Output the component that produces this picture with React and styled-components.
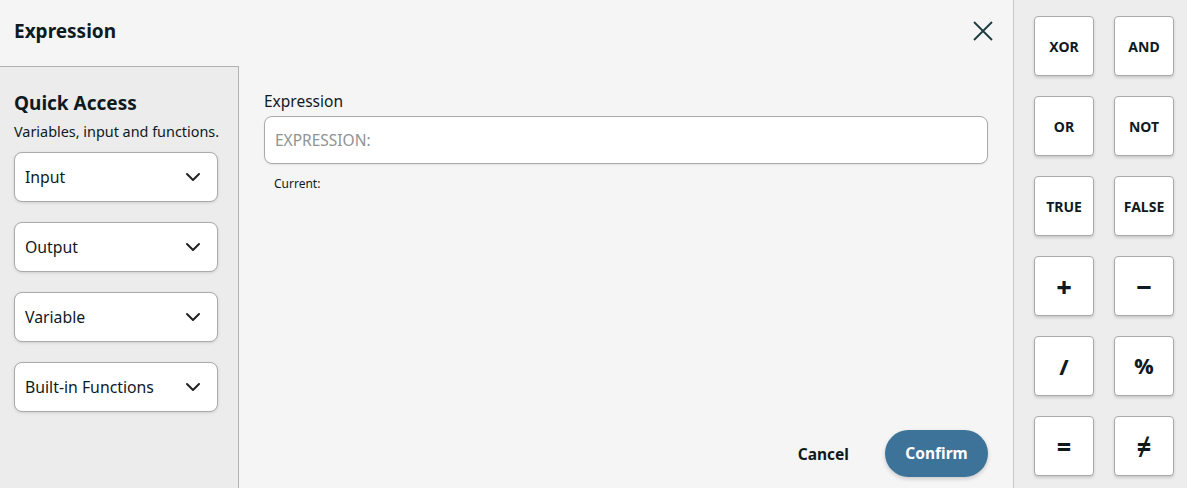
import React from "react";
import styled, { createGlobalStyle } from "styled-components";

const GlobalStyle = createGlobalStyle`
  html, body {
    margin: 0;
    padding: 0;
    height: 100%;
  }
  body {
    font-family: "Noto Sans", "Open Sans", sans-serif;
    color: #0e1a1f;
    background: #f4f5f4;
  }
  * {
    box-sizing: border-box;
  }
`;

const Page = styled.div`
  display: flex;
  width: 1187px;
  height: 488px;
  overflow: hidden;
`;

const Dialog = styled.div`
  flex: 1;
  display: flex;
  flex-direction: column;
  background: #f4f5f4;
  border-right: 1px solid #c9cbca;
`;

const Header = styled.div`
  height: 66px;
  display: flex;
  align-items: center;
  justify-content: space-between;
  padding: 0 18px 4px 14px;
`;

const Title = styled.h1`
  margin: 0;
  font-size: 19px;
  font-weight: 700;
`;

const CloseButton = styled.button`
  border: none;
  background: none;
  padding: 0;
  width: 24px;
  height: 24px;
  display: flex;
  align-items: center;
  justify-content: center;
  color: #1d3a40;
  cursor: pointer;
`;

const Body = styled.div`
  flex: 1;
  display: flex;
  min-height: 0;
`;

const Sidebar = styled.aside`
  width: 239px;
  background: #ebeceb;
  border-top: 1px solid #b0b1b0;
  border-right: 1px solid #b0b1b0;
  padding: 22px 20px 0 14px;
  display: flex;
  flex-direction: column;
`;

const SideTitle = styled.h2`
  margin: 0;
  font-size: 19px;
  font-weight: 700;
  line-height: 28px;
`;

const SideText = styled.p`
  margin: 5px -20px 10px 0;
  font-size: 14.4px;
  line-height: 20px;
  white-space: nowrap;
`;

const DropList = styled.div`
  display: flex;
  flex-direction: column;
  gap: 20px;
`;

const Dropdown = styled.button`
  width: 204px;
  height: 50px;
  display: flex;
  align-items: center;
  justify-content: space-between;
  padding: 0 16px 0 10px;
  background: #fff;
  border: 1px solid #a9abaa;
  border-radius: 8px;
  box-shadow: 0 1px 3px rgba(0, 0, 0, 0.12);
  font-family: inherit;
  font-size: 15.8px;
  color: #0e1a1f;
  cursor: pointer;
`;

const Main = styled.main`
  flex: 1;
  display: flex;
  flex-direction: column;
  padding: 24px 25px 11px 25px;
`;

const Label = styled.label`
  font-size: 15.5px;
  line-height: 22px;
  margin-bottom: 4px;
`;

const Input = styled.input`
  width: 100%;
  height: 48px;
  flex-shrink: 0;
  border: 1px solid #a9abaa;
  border-radius: 8px;
  background: #fff;
  padding: 0 10px;
  font-family: inherit;
  font-size: 15.5px;
  box-shadow: 0 1px 2px rgba(0, 0, 0, 0.08);
  &::placeholder {
    color: #8f9392;
  }
`;

const Current = styled.div`
  font-size: 12px;
  margin: 11px 0 0 10px;
`;

const Footer = styled.div`
  margin-top: auto;
  display: flex;
  justify-content: flex-end;
  align-items: center;
  gap: 30px;
`;

const TextButton = styled.button`
  border: none;
  background: none;
  font-family: inherit;
  font-size: 15.5px;
  font-weight: 700;
  color: #0e1a1f;
  cursor: pointer;
`;

const PrimaryButton = styled.button`
  height: 47px;
  width: 103px;
  border: none;
  border-radius: 24px;
  background: #3d7399;
  color: #fff;
  font-family: inherit;
  font-size: 15.5px;
  font-weight: 700;
  padding: 0 0 2px;
  box-shadow: 0 2px 4px rgba(0, 0, 0, 0.18);
  cursor: pointer;
`;

const Keypad = styled.div`
  width: 173px;
  background: #ecedec;
  display: grid;
  grid-template-columns: repeat(2, 60px);
  grid-auto-rows: 60px;
  gap: 20px;
  padding: 16px 0 0 20px;
  align-content: start;
`;

const Key = styled.button`
  background: #fff;
  border: 1px solid #a9abaa;
  border-radius: 4px;
  box-shadow: 0 2px 3px rgba(0, 0, 0, 0.14);
  font-family: inherit;
  font-weight: ${p => (p.$size > 14 ? 800 : 700)};
  font-size: ${p => p.$size}px;
  color: #0e1a1f;
  padding: 0;
  cursor: pointer;
  display: flex;
  align-items: center;
  justify-content: center;
`;

const Chevron = () => (
  <svg width="16" height="16" viewBox="0 0 16 16" fill="none">
    <path d="M2 5l6 6 6-6" stroke="#222" strokeWidth="2" strokeLinecap="round" strokeLinejoin="round" />
  </svg>
);

const groups = ["Input", "Output", "Variable", "Built-in Functions"];

const keys = [
  { label: "XOR", size: 14 },
  { label: "AND", size: 14 },
  { label: "OR", size: 14 },
  { label: "NOT", size: 14 },
  { label: "TRUE", size: 14 },
  { label: "FALSE", size: 14 },
  { label: "+", size: 27 },
  { label: "−", size: 27 },
  { label: "/", size: 22 },
  { label: "%", size: 21 },
  { label: "=", size: 25 },
  { label: "≠", size: 25 },
];

const App = () => (
  <>
    <GlobalStyle />
    <Page>
      <Dialog>
        <Header>
          <Title>Expression</Title>
          <CloseButton aria-label="Close">
            <svg width="22" height="22" viewBox="0 0 22 22" fill="none">
              <path d="M2 2l18 18M20 2L2 20" stroke="currentColor" strokeWidth="1.8" />
            </svg>
          </CloseButton>
        </Header>
        <Body>
          <Sidebar>
            <SideTitle>Quick Access</SideTitle>
            <SideText>Variables, input and functions.</SideText>
            <DropList>
              {groups.map(g => (
                <Dropdown key={g}>
                  {g}
                  <Chevron />
                </Dropdown>
              ))}
            </DropList>
          </Sidebar>
          <Main>
            <Label>Expression</Label>
            <Input placeholder="EXPRESSION:" />
            <Current>Current:</Current>
            <Footer>
              <TextButton>Cancel</TextButton>
              <PrimaryButton>Confirm</PrimaryButton>
            </Footer>
          </Main>
        </Body>
      </Dialog>
      <Keypad>
        {keys.map(k => (
          <Key key={k.label} $size={k.size}>
            {k.label}
          </Key>
        ))}
      </Keypad>
    </Page>
  </>
);

export default App;
